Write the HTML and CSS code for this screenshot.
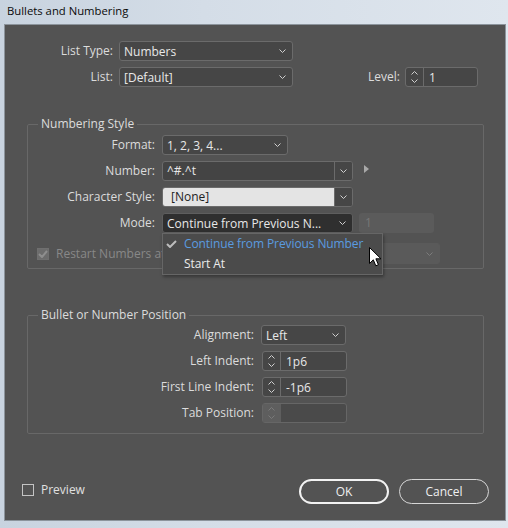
FILE: index.html
```html
<!DOCTYPE html>
<html>
<head>
<meta charset="utf-8">
<link rel="stylesheet" href="styles.css">
</head>
<body>
<div class="window">
  <div class="titlebar">Bullets and Numbering</div>
  <div class="panel">
    <div class="top-grid">
      <span class="lbl">List Type:</span>
      <div class="select w174"><span class="val">Numbers</span><svg class="chev" width="7" height="4" viewBox="0 0 7 4"><polyline points="0.5,0.5 3.5,3.5 6.5,0.5"/></svg></div>
      <div></div>
      <span class="lbl">List:</span>
      <div class="select w174"><span class="val">[Default]</span><svg class="chev" width="7" height="4" viewBox="0 0 7 4"><polyline points="0.5,0.5 3.5,3.5 6.5,0.5"/></svg></div>
      <div class="level">
        <span class="lbl">Level:</span>
        <div class="spinner w73">
          <div class="arrows"><svg width="7" height="4" viewBox="0 0 7 4"><polyline points="0.5,3.5 3.5,0.5 6.5,3.5"/></svg><svg width="7" height="4" viewBox="0 0 7 4"><polyline points="0.5,0.5 3.5,3.5 6.5,0.5"/></svg></div>
          <span class="val">1</span>
        </div>
      </div>
    </div>

    <fieldset class="group g1">
      <legend>Numbering Style</legend>
      <div class="form-grid">
        <span class="lbl">Format:</span>
        <div class="row"><div class="select w126"><span class="val">1, 2, 3, 4...</span><svg class="chev" width="7" height="4" viewBox="0 0 7 4"><polyline points="0.5,0.5 3.5,3.5 6.5,0.5"/></svg></div></div>

        <span class="lbl">Number:</span>
        <div class="row">
          <div class="combo w191"><span class="val">^#.^t</span><span class="btn"><svg width="7" height="4" viewBox="0 0 7 4"><polyline points="0.5,0.5 3.5,3.5 6.5,0.5"/></svg></span></div>
          <svg class="tri" width="5" height="8" viewBox="0 0 5 8"><polygon points="0,0 5,4 0,8"/></svg>
        </div>

        <span class="lbl">Character Style:</span>
        <div class="row">
          <div class="combo w191 light"><span class="val">[None]</span><span class="btn"><svg width="7" height="4" viewBox="0 0 7 4"><polyline points="0.5,0.5 3.5,3.5 6.5,0.5"/></svg></span></div>
        </div>

        <span class="lbl">Mode:</span>
        <div class="row">
          <div class="mode-wrap">
            <div class="select w191 active"><span class="val">Continue from Previous N...</span><svg class="chev" width="7" height="4" viewBox="0 0 7 4"><polyline points="0.5,0.5 3.5,3.5 6.5,0.5"/></svg></div>
            <div class="menu">
              <div class="item sel"><svg class="check" width="11" height="8" viewBox="0 0 11 8"><polyline points="1,4 4,7 10,1"/></svg><span>Continue from Previous Number</span></div>
              <div class="item"><span>Start At</span></div>
              <svg class="cursor" width="13" height="20" viewBox="0 0 13 20"><path d="M0.5 0.5 L0.5 16.5 L4.3 12.8 L6.8 18.8 L9.4 17.7 L6.9 11.8 L12 11.8 Z"/></svg>
            </div>
          </div>
          <div class="numbox disabled">1</div>
        </div>
      </div>
      <div class="restart">
        <span class="cb checked disabled"><svg width="10" height="8" viewBox="0 0 10 8"><polyline points="1,4 4,7 9,1"/></svg></span>
        <span class="dis-text">Restart Numbers at This Level After:</span>
        <div class="select dis-select"><span class="val"></span><svg class="chev" width="7" height="4" viewBox="0 0 7 4"><polyline points="0.5,0.5 3.5,3.5 6.5,0.5"/></svg></div>
      </div>
    </fieldset>

    <fieldset class="group g2">
      <legend>Bullet or Number Position</legend>
      <div class="form-grid2">
        <span class="lbl">Alignment:</span>
        <div class="row"><div class="select w85"><span class="val">Left</span><svg class="chev" width="7" height="4" viewBox="0 0 7 4"><polyline points="0.5,0.5 3.5,3.5 6.5,0.5"/></svg></div></div>

        <span class="lbl">Left Indent:</span>
        <div class="row"><div class="spinner w85 sp-off">
          <div class="arrows"><svg width="7" height="4" viewBox="0 0 7 4"><polyline points="0.5,3.5 3.5,0.5 6.5,3.5"/></svg><svg width="7" height="4" viewBox="0 0 7 4"><polyline points="0.5,0.5 3.5,3.5 6.5,0.5"/></svg></div>
          <span class="val">1p6</span>
        </div></div>

        <span class="lbl">First Line Indent:</span>
        <div class="row"><div class="spinner w85 sp-off">
          <div class="arrows"><svg width="7" height="4" viewBox="0 0 7 4"><polyline points="0.5,3.5 3.5,0.5 6.5,3.5"/></svg><svg width="7" height="4" viewBox="0 0 7 4"><polyline points="0.5,0.5 3.5,3.5 6.5,0.5"/></svg></div>
          <span class="val">-1p6</span>
        </div></div>

        <span class="lbl">Tab Position:</span>
        <div class="row"><div class="spinner w85 sp-off disabled">
          <div class="arrows"><svg width="7" height="4" viewBox="0 0 7 4"><polyline points="0.5,3.5 3.5,0.5 6.5,3.5"/></svg><svg width="7" height="4" viewBox="0 0 7 4"><polyline points="0.5,0.5 3.5,3.5 6.5,0.5"/></svg></div>
          <span class="val"></span>
        </div></div>
      </div>
    </fieldset>

    <div class="footer">
      <label class="preview"><span class="cb"></span><span>Preview</span></label>
      <div class="buttons">
        <button class="btn-pill primary">OK</button>
        <button class="btn-pill">Cancel</button>
      </div>
    </div>
  </div>
</div>
</body>
</html>
```

FILE: styles.css
```css
html, body {
  margin: 0;
  padding: 0;
}
body {
  width: 508px;
  height: 528px;
  overflow: hidden;
  background: linear-gradient(90deg, #c8d3df 0%, #d4dde7 40%, #dfe6ee 100%);
  font-family: "Open Sans", "Noto Sans", "DejaVu Sans", sans-serif;
  font-size: 12px;
  color: #dedede;
}
.window {
  width: 508px;
  height: 528px;
  display: flex;
  flex-direction: column;
}
.titlebar {
  height: 25px;
  line-height: 22px;
  padding-left: 7px;
  color: #0a0a0a;
  font-size: 11.3px;
  box-sizing: border-box;
}
.panel {
  margin-left: 5px;
  width: 500px;
  height: 495px;
  background: #535353;
  box-sizing: border-box;
  padding: 16px 21px 0 22px;
  box-shadow: 0 0 0 1px #8c949c;
}
.lbl {
  text-align: right;
  white-space: nowrap;
  line-height: 20px;
  color: #dcdcdc;
}
.top-grid {
  display: grid;
  grid-template-columns: 86px 174px 1fr;
  grid-auto-rows: 20px;
  column-gap: 6px;
  row-gap: 6px;
}
.level {
  display: flex;
  justify-content: flex-end;
  gap: 5px;
  margin-right: 6px;
}
svg polyline {
  fill: none;
  stroke: #cfcfcf;
  stroke-width: 1;
}
.select {
  box-sizing: border-box;
  height: 20px;
  border: 1px solid #6b6b6b;
  border-radius: 3px;
  background: #464646;
  display: flex;
  align-items: center;
  padding: 0 6px 0 4px;
  color: #e8e8e8;
}
.select .val {
  flex: 1;
  white-space: nowrap;
  overflow: hidden;
}
.w174 { width: 174px; }
.w126 { width: 126px; }
.w191 { width: 191px; }
.w85 { width: 85px; }
.w73 { width: 73px; }
.select.active {
  background: #2f2f2f;
  border-color: #5e5e5e;
}
.spinner {
  box-sizing: border-box;
  height: 20px;
  border: 1px solid #6b6b6b;
  border-radius: 3px;
  background: #464646;
  display: flex;
  align-items: center;
  color: #e8e8e8;
}
.spinner .arrows {
  width: 17px;
  height: 100%;
  border-right: 1px solid #6b6b6b;
  display: flex;
  flex-direction: column;
  align-items: center;
  justify-content: center;
  gap: 4px;
  flex: none;
}
.spinner .arrows svg { display: block; }
.spinner .val {
  padding-left: 5px;
}
.sp-off { margin-left: 1px; }
.spinner.disabled .arrows {
  background: #5e5e5e;
  border-right-color: #5e5e5e;
}
.spinner.disabled {
  border-color: #666;
  background: #4a4a4a;
}
.spinner.disabled polyline { stroke: #7a7a7a; }

.group {
  border: 1px solid #686868;
  border-radius: 2px;
  margin: 0;
  min-width: 0;
}
.group legend {
  margin-left: 10px;
  padding: 0 3px;
  line-height: 16px;
  color: #dcdcdc;
}
.g1 {
  margin-top: 29px;
  padding: 3px 0 4px 0;
}
.g2 {
  margin-top: 38px;
  padding: 2px 0 10px 0;
}
.form-grid {
  display: grid;
  grid-template-columns: 127px 1fr;
  grid-auto-rows: 20px;
  column-gap: 7px;
  row-gap: 6px;
}
.form-grid2 {
  display: grid;
  grid-template-columns: 226px 1fr;
  grid-auto-rows: 20px;
  column-gap: 7px;
  row-gap: 6px;
}
.row {
  display: flex;
  align-items: center;
}
.combo {
  box-sizing: border-box;
  height: 20px;
  border: 1px solid #6b6b6b;
  border-radius: 3px;
  background: #444444;
  display: flex;
  align-items: stretch;
  color: #e8e8e8;
  overflow: hidden;
}
.combo .val {
  flex: 1;
  padding-left: 4px;
  line-height: 18px;
  white-space: nowrap;
}
.combo .btn {
  width: 17px;
  border-left: 1px solid #6b6b6b;
  background: #464646;
  display: flex;
  align-items: center;
  justify-content: center;
  flex: none;
}
.combo.light .val {
  background: #e4e4e4;
  color: #1e1e1e;
  padding-left: 8px;
}
.tri {
  margin-left: 11px;
  margin-top: -4px;
}
.tri polygon { fill: #a8a8a8; }
.mode-wrap {
  position: relative;
}
.numbox {
  box-sizing: border-box;
  width: 75px;
  height: 20px;
  margin-left: 6px;
  border-radius: 3px;
  background: #5b5b5b;
  color: #777;
  line-height: 20px;
  padding-left: 6px;
}
.menu {
  position: absolute;
  left: 0;
  top: 100%;
  width: 221px;
  box-sizing: border-box;
  padding: 0 0;
  background: #4b4b4b;
  border: 1px solid #666;
  box-shadow: 1px 2px 3px rgba(0,0,0,0.35);
  z-index: 5;
}
.menu .item {
  height: 20px;
  line-height: 20px;
  padding-left: 21px;
  position: relative;
  color: #ececec;
  white-space: nowrap;
  letter-spacing: -0.1px;
}
.menu .item.sel { color: #5a9be0; }
.menu .check {
  position: absolute;
  left: 3px;
  top: 6px;
}
.menu .check polyline {
  stroke: #bdbdbd;
  stroke-width: 2;
}
.cursor {
  position: absolute;
  left: 206px;
  top: 13px;
}
.cursor path {
  fill: #fff;
  stroke: #000;
  stroke-width: 1;
}
.restart {
  display: flex;
  align-items: center;
  height: 21px;
  margin-top: 10px;
  padding-left: 9px;
  padding-right: 43px;
}
.cb {
  box-sizing: border-box;
  width: 12px;
  height: 12px;
  border: 1px solid #c4c4c4;
  flex: none;
  display: flex;
  align-items: center;
  justify-content: center;
}
.cb.disabled {
  border-color: #6f6f6f;
  background: #6c6c6c;
}
.cb.disabled polyline {
  stroke: #8e8e8e;
  stroke-width: 2;
}
.dis-text {
  margin-left: 7px;
  color: #888;
  white-space: nowrap;
  max-width: 106px;
  overflow: hidden;
}
.dis-select {
  margin-left: auto;
  width: 150px;
  height: 21px;
  border-color: #5a5a5a;
  background: #5a5a5a;
  flex: none;
}
.dis-select polyline { stroke: #7c7c7c; }
.footer {
  margin: 45px -5px 0 -5px;
  display: flex;
  align-items: center;
  height: 25px;
}
.preview {
  display: flex;
  align-items: center;
  gap: 7px;
  margin-bottom: 4px;
  color: #e0e0e0;
}
.buttons {
  margin-left: auto;
  display: flex;
  gap: 10px;
}
.btn-pill {
  box-sizing: border-box;
  width: 90px;
  height: 25px;
  border-radius: 13px;
  border: 1px solid #d6d6d6;
  background: transparent;
  color: #f0f0f0;
  font-family: inherit;
  font-size: 12px;
  padding: 0;
}
.btn-pill.primary {
  border: 2px solid #f2f2f2;
}
```
